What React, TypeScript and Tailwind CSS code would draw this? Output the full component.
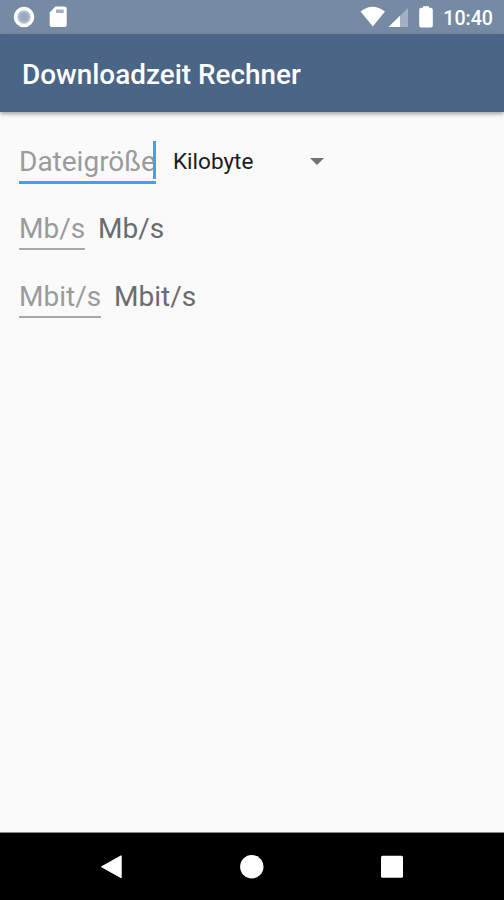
import React, { useState } from 'react';

interface HintFieldProps {
  hint: string;
  focused?: boolean;
  width: string;
  onClick: () => void;
}

const HintField: React.FC<HintFieldProps> = ({ hint, focused, width, onClick }: HintFieldProps) => (
  <div
    onClick={onClick}
    className={`relative shrink-0 cursor-text text-[28px] leading-[42px] text-[#9b9b9b] whitespace-nowrap ${width} ${focused ? 'h-[43px] border-b-3 border-[#3fa3ea]' : 'h-[42px] border-b-2 border-[#a8a8a8]'}`}
  >
    {hint}
    {/* Caret */}
    {focused && <span className="absolute right-0 top-0 h-[38px] w-[3px] bg-[#3fa3ea]" />}
  </div>
);

const StatusBar: React.FC = () => (
  <div className="flex h-[34px] shrink-0 items-center justify-between bg-[#768ba3] pl-[13px] pr-[11px] text-white">
    <div className="flex items-center gap-[14px]">
      <svg width="22" height="22" viewBox="0 0 22 22">
        <circle cx="11" cy="11" r="8.5" fill="#b4bece" stroke="white" strokeWidth="3.6" />
        <circle cx="11" cy="11" r="4.5" fill="#9ba9be" />
      </svg>
      <svg width="18" height="22" viewBox="0 0 18 22">
        <path d="M6.5 .5H15.7Q17.7 .5 17.7 2.5V19Q17.7 21 15.7 21H2.7Q.7 21 .7 19V6.5Z" fill="white" />
        <path d="M7 3.5H14.7V7H7Z" fill="#a3b0c1" />
      </svg>
    </div>
    <div className="flex items-center">
      <svg width="25" height="22" viewBox="0 0 25 22">
        <path d="M.5 5.5Q12.5-4 25 5.5L12.8 20.5Z" fill="white" />
      </svg>
      <svg className="ml-[3px]" width="20" height="22" viewBox="0 0 20 22">
        <path d="M.5 21L20 2V21Z" fill="#a3b0c0" />
        <path d="M.5 21L12 9.8V21Z" fill="white" />
      </svg>
      <svg className="ml-[11px]" width="14" height="22" viewBox="0 0 14 22">
        <path d="M4 .3H10V1.8H11.5Q13.8 1.8 13.8 4V19.5Q13.8 21.5 11.8 21.5H2.2Q.2 21.5 .2 19.5V4Q.2 1.8 2.5 1.8H4Z" fill="white" />
      </svg>
      <span className="ml-[10px] pt-[3px] text-[19.6px] font-medium leading-[31px]">10:40</span>
    </div>
  </div>
);

const NavigationBar: React.FC = () => (
  <nav className="flex h-[68px] shrink-0 items-center justify-between border-t border-[#888] bg-black px-[100px]">
    <button aria-label="Back">
      <svg width="24" height="24" viewBox="0 0 24 24">
        <path d="M1.5 11.8L21.2 .8V22.8Z" fill="white" stroke="white" strokeLinejoin="round" />
      </svg>
    </button>
    <button aria-label="Home">
      <svg width="24" height="24" viewBox="0 0 24 24">
        <circle cx="11.8" cy="11.8" r="11.7" fill="white" />
      </svg>
    </button>
    <button aria-label="Overview">
      <svg width="24" height="24" viewBox="0 0 24 24">
        <rect x="1" y="0.7" width="22" height="22" rx="1.5" fill="white" />
      </svg>
    </button>
  </nav>
);

export default function App() {
  const [focus, setFocus] = useState('size');

  return (
    <div className="flex h-[900px] w-[504px] flex-col overflow-hidden bg-[#fafafa] font-['Roboto',sans-serif]">
      <StatusBar />
      <header className="flex h-[78px] shrink-0 items-center bg-[#4a6585] px-[22px] pt-[4px] shadow-[0_2px_4px_rgba(0,0,0,0.35)]">
        <h1 className="text-[27.9px] font-medium leading-none text-white">Downloadzeit Rechner</h1>
      </header>

      <main className="flex flex-1 flex-col gap-[24px] pl-[19px] pt-[29px]">
        <div className="flex h-[43px]">
          <HintField hint="Dateigröße" width="w-[137px]" focused={focus === 'size'} onClick={() => setFocus('size')} />
          <button className="ml-[17px] flex h-[42px] w-[151px] items-center justify-between text-[22.5px] text-[#1c1c1c]">
            Kilobyte
            <svg className="mb-[2px]" width="14" height="7" viewBox="0 0 14 7">
              <path d="M0 0H14L7 7Z" fill="#737373" />
            </svg>
          </button>
        </div>
        <div className="flex h-[43px]">
          <HintField hint="Mb/s" width="w-[66px]" focused={focus === 'mb'} onClick={() => setFocus('mb')} />
          <span className="ml-[13px] text-[28px] leading-[42px] text-[#6c6c6c]">Mb/s</span>
        </div>
        <div className="mt-px flex h-[43px]">
          <HintField hint="Mbit/s" width="w-[82px]" focused={focus === 'mbit'} onClick={() => setFocus('mbit')} />
          <span className="ml-[13px] text-[28px] leading-[42px] text-[#6c6c6c]">Mbit/s</span>
        </div>
      </main>

      <NavigationBar />
    </div>
  );
}
